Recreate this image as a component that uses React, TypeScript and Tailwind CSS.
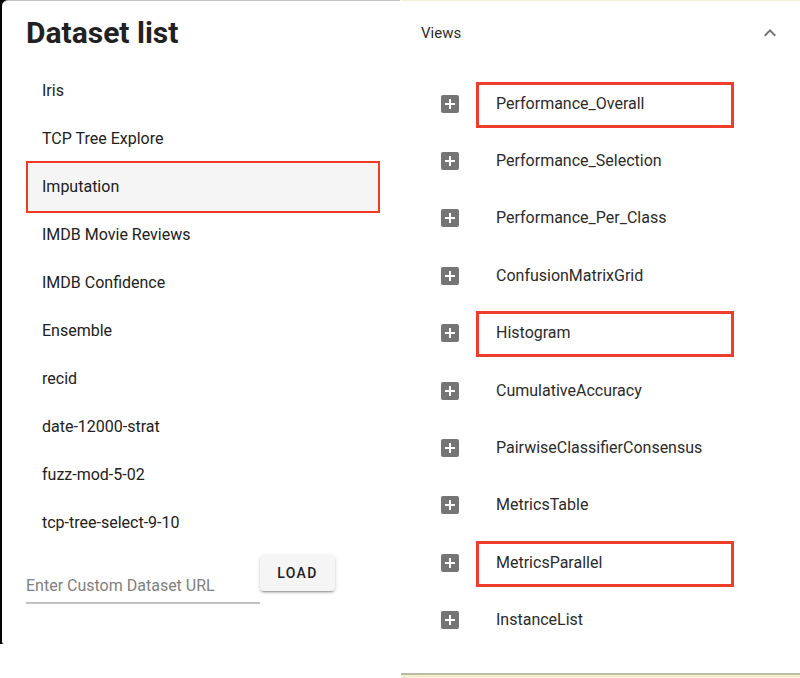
const datasets = [
  'Iris',
  'TCP Tree Explore',
  'Imputation',
  'IMDB Movie Reviews',
  'IMDB Confidence',
  'Ensemble',
  'recid',
  'date-12000-strat',
  'fuzz-mod-5-02',
  'tcp-tree-select-9-10',
];

const views = [
  { name: 'Performance_Overall', marked: true },
  { name: 'Performance_Selection' },
  { name: 'Performance_Per_Class' },
  { name: 'ConfusionMatrixGrid' },
  { name: 'Histogram', marked: true },
  { name: 'CumulativeAccuracy' },
  { name: 'PairwiseClassifierConsensus' },
  { name: 'MetricsTable' },
  { name: 'MetricsParallel', marked: true },
  { name: 'InstanceList' },
];

function DatasetPanel() {
  return (
    <section className="bg-black pl-0.5">
      <div className="rounded-tl-md rounded-bl-xs border-t border-[#c4c4c4] bg-white pt-3 pr-5 pb-10 pl-6">
        <h1 className="text-[30px] leading-10 font-bold">Dataset list</h1>
        <ul className="mt-3.5">
          {datasets.map((name) => (
            <li key={name} className="relative">
              <button
                type="button"
                className={`flex h-12 w-full items-center px-4 text-left ${name === 'Imputation' ? 'bg-[#f5f5f5]' : ''}`}
              >
                {name}
              </button>
              {name === 'Imputation' && (
                <span className="pointer-events-none absolute -inset-y-0.5 inset-x-0 border-2 border-[#f03a21]" />
              )}
            </li>
          ))}
        </ul>
        <form className="mt-2 flex items-start" onSubmit={(e) => e.preventDefault()}>
          <input
            type="url"
            aria-label="Enter Custom Dataset URL"
            placeholder="Enter Custom Dataset URL"
            className="mt-3.5 h-[35px] w-[234px] border-b-2 border-[#c0c0c0] placeholder:text-[#808080] focus:outline-none"
          />
          <button
            type="submit"
            className="h-9 w-[75px] rounded bg-[#f5f5f5] text-sm font-medium tracking-widest shadow-[0_3px_1px_-2px_rgba(0,0,0,0.2),0_2px_2px_0_rgba(0,0,0,0.14),0_1px_5px_0_rgba(0,0,0,0.12)]"
          >
            LOAD
          </button>
        </form>
      </div>
    </section>
  );
}

function ViewsPanel() {
  return (
    <section className="ml-px border-t border-[#f3f1d3] bg-white text-[#2b2b2b]">
      <button type="button" className="flex h-16 w-full items-center justify-between pr-[18px] pl-5 text-[15px]">
        Views
        <svg viewBox="0 0 24 24" className="size-6 fill-[#757575]" aria-hidden="true">
          <path d="M7.41 15.41 12 10.83l4.59 4.58L18 14l-6-6-6 6z" />
        </svg>
      </button>
      <ul className="mt-2.5 grid h-[574px] auto-rows-fr">
        {views.map(({ name, marked }) => (
          <li key={name} className="flex items-center gap-3.5 pl-[37px]">
            <button type="button" aria-label={`Add ${name}`}>
              <svg viewBox="0 0 24 24" className="size-6 fill-[#757575]" aria-hidden="true">
                <path d="M19 3H5a2 2 0 0 0-2 2v14a2 2 0 0 0 2 2h14a2 2 0 0 0 2-2V5a2 2 0 0 0-2-2zm-2 10h-4v4h-2v-4H7v-2h4V7h2v4h4z" />
              </svg>
            </button>
            <span className="relative flex h-11 w-[258px] items-center px-5">
              {name}
              {marked && (
                <span className="pointer-events-none absolute inset-x-0 top-0 -bottom-0.5 border-3 border-[#ee3d2b]" />
              )}
            </span>
          </li>
        ))}
      </ul>
      <div className="mt-6 h-[5px] border-t-2 border-[#bdbba4] bg-[#f1efd0]" />
    </section>
  );
}

export default function App() {
  return (
    <main className="grid grid-cols-2 items-start overflow-hidden bg-white font-[Roboto,sans-serif] text-base text-[#212121]">
      <DatasetPanel />
      <ViewsPanel />
    </main>
  );
}
